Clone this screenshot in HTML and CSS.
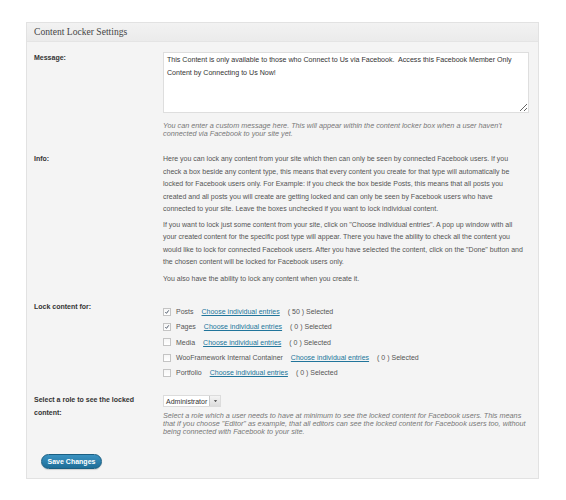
FILE: index.html
```html
<!DOCTYPE html>
<html>
<head>
<meta charset="utf-8">
<link rel="stylesheet" href="styles.css">
</head>
<body>
<div class="panel">
  <div class="panel-head">Content Locker Settings</div>
  <div class="panel-body">
    <div class="row row-message">
      <div class="label">Message:</div>
      <div class="value">
        <textarea class="message" readonly>This Content is only available to those who Connect to Us via Facebook.  Access this Facebook Member Only Content by Connecting to Us Now!</textarea>
        <p class="hint hint-message">You can enter a custom message here. This will appear within the content locker box when a user haven't connected via Facebook to your site yet.</p>
      </div>
    </div>
    <div class="row row-info">
      <div class="label">Info:</div>
      <div class="value info">
        <p>Here you can lock any content from your site which then can only be seen by connected Facebook users. If you check a box beside any content type, this means that every content you create for that type will automatically be locked for Facebook users only. For Example: if you check the box beside Posts, this means that all posts you created and all posts you will create are getting locked and can only be seen by Facebook users who have connected to your site. Leave the boxes unchecked if you want to lock individual content.</p>
        <p>If you want to lock just some content from your site, click on "Choose individual entries". A pop up window with all your created content for the specific post type will appear. There you have the ability to check all the content you would like to lock for connected Facebook users. After you have selected the content, click on the "Done" button and the chosen content will be locked for Facebook users only.</p>
        <p>You also have the ability to lock any content when you create it.</p>
      </div>
    </div>
    <div class="row row-lock">
      <div class="label">Lock content for:</div>
      <div class="value checks">
        <div class="check-row"><span class="cb checked"><svg viewBox="0 0 8 8"><path d="M1.8 4.2 L3.3 5.8 L6.3 1.8" /></svg></span><span>Posts</span><a href="#">Choose individual entries</a><span>( 50 ) Selected</span></div>
        <div class="check-row"><span class="cb checked"><svg viewBox="0 0 8 8"><path d="M1.8 4.2 L3.3 5.8 L6.3 1.8" /></svg></span><span>Pages</span><a href="#">Choose individual entries</a><span>( 0 ) Selected</span></div>
        <div class="check-row"><span class="cb"></span><span>Media</span><a href="#">Choose individual entries</a><span>( 0 ) Selected</span></div>
        <div class="check-row"><span class="cb"></span><span>WooFramework Internal Container</span><a href="#">Choose individual entries</a><span>( 0 ) Selected</span></div>
        <div class="check-row"><span class="cb"></span><span>Portfolio</span><a href="#">Choose individual entries</a><span>( 0 ) Selected</span></div>
      </div>
    </div>
    <div class="row row-role">
      <div class="label">Select a role to see the locked content:</div>
      <div class="value">
        <div class="select"><span class="select-text">Administrator</span><span class="select-btn"><svg viewBox="0 0 6 4"><path d="M1 1 L5 1 L3 3.2 Z"/></svg></span></div>
        <p class="hint hint-role">Select a role which a user needs to have at minimum to see the locked content for Facebook users. This means that if you choose "Editor" as example, that all editors can see the locked content for Facebook users too, without being connected with Facebook to your site.</p>
      </div>
    </div>
    <div class="actions">
      <button class="btn-primary">Save Changes</button>
    </div>
  </div>
</div>
</body>
</html>
```
FILE: styles.css
```css
html, body {
  margin: 0;
  padding: 0;
  background: #ffffff;
}
body {
  font-family: "Liberation Sans", Arial, sans-serif;
  font-size: 7px;
  color: #444;
}
.panel {
  margin: 22px 0 0 26px;
  width: 513px;
  height: 457px;
  box-sizing: border-box;
  border: 1px solid #e2e2e2;
  background: #f4f4f4;
}
.panel-head {
  height: 18px;
  line-height: 17px;
  padding-left: 7px;
  font-family: "Liberation Serif", "Times New Roman", serif;
  font-size: 9.6px;
  color: #464646;
  background: linear-gradient(#f2f2f2, #ebebeb);
  border-bottom: 1px solid #e4e4e4;
}
.panel-body {
  padding: 0 0 0 7px;
}
.row {
  display: flex;
}
.label {
  width: 129px;
  flex: none;
  font-weight: bold;
  color: #333;
}
.value {
  width: 366px;
}
p { margin: 0; }

.row-message { padding-top: 10px; }
.row-message .label { padding-top: 1px; line-height: 9px; }
.message {
  display: block;
  box-sizing: border-box;
  width: 366px;
  height: 61px;
  margin: 0;
  padding: 1px 3px;
  border: 1px solid #dedede;
  background: #fff;
  font-family: "Liberation Sans", Arial, sans-serif;
  font-size: 7.1px;
  line-height: 13px;
  color: #333;
  resize: vertical;
  outline: none;
}
.hint {
  font-style: italic;
  color: #777;
  line-height: 8px;
  font-size: 7.25px;
}
.hint-message { margin-top: 9px; max-width: 345px; }

.row-info { padding-top: 15px; }
.row-info .label { line-height: 12.5px; }
.info { width: 362px; line-height: 12.5px; color: #555; }
.info p + p { margin-top: 3px; }
.info p:last-child { margin-top: 4px; }

.row-lock { padding-top: 16px; }
.row-lock .label { line-height: 12px; }
.checks { padding-top: 3px; }
.check-row {
  display: flex;
  align-items: center;
  gap: 6px;
  height: 15.3px;
  color: #555;
}
.check-row a { color: #21759b; text-decoration: underline; margin: 0 2px; }
.cb {
  box-sizing: border-box;
  width: 8px;
  height: 8px;
  margin-right: -1px;
  border: 1px solid #c4c4c4;
  background: linear-gradient(#f6f6f6, #fff);
  display: inline-flex;
}
.cb svg { width: 6px; height: 6px; }
.cb path { fill: none; stroke: #3c4a5c; stroke-width: 1.2; }

.row-role { padding-top: 13px; }
.row-role .label { width: 110px; margin-right: 19px; line-height: 13px; }
.select {
  display: flex;
  width: 58px;
  height: 12px;
  box-sizing: border-box;
  border: 1px solid #dcdcdc;
  background: #fff;
  align-items: center;
  margin-top: 2px;
  overflow: hidden;
}
.select-text {
  flex: 1;
  overflow: hidden;
  white-space: nowrap;
  padding-left: 2px;
  color: #333;
}
.select-btn {
  width: 10px;
  height: 10px;
  background: linear-gradient(#f4f4f4, #dcdcdc);
  border-left: 1px solid #c8c8c8;
  display: flex;
  align-items: center;
  justify-content: center;
}
.select-btn svg { width: 5px; height: 4px; }
.select-btn path { fill: #333; }
.hint-role { margin-top: 5px; }

.actions { padding: 18px 0 0 7px; }
.btn-primary {
  width: 61px;
  height: 15px;
  padding: 0;
  border: 1px solid #1b5f82;
  border-radius: 8px;
  background: linear-gradient(#3a92c1, #1f6e98);
  color: #fff;
  font-family: "Liberation Sans", Arial, sans-serif;
  font-weight: bold;
  font-size: 7px;
  box-shadow: 0 1px 1px rgba(0,0,0,0.15);
}
```
